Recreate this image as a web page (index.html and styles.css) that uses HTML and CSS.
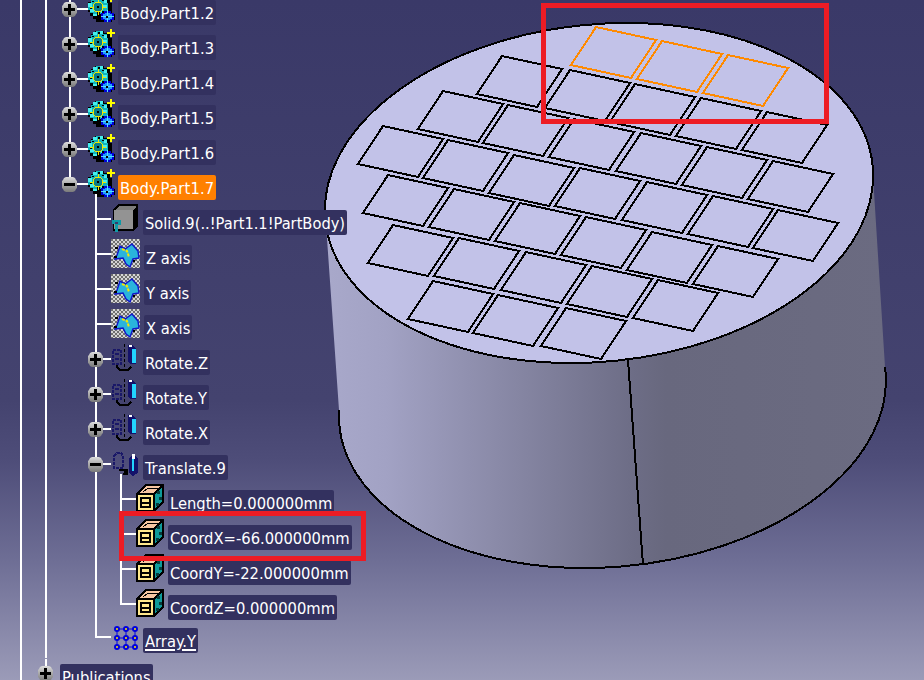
FILE: index.html
```html
<!DOCTYPE html>
<html lang="en">

<head>
    <meta charset="UTF-8" />
    <title>Body.Part1.7 - Translate.9</title>
    <link rel="stylesheet" href="styles.css">
</head>

<body>
    <!-- shared icons -->
    <svg class="sprites" aria-hidden="true">
        <defs>
            <pattern id="checker" width="4" height="4" patternUnits="userSpaceOnUse">
                <rect width="4" height="4" fill="#d4d4d4" />
                <rect width="2" height="2" fill="#6f6f6f" />
                <rect x="2" y="2" width="2" height="2" fill="#6f6f6f" />
            </pattern>
            <linearGradient id="ball" x1="0" y1="0" x2="0" y2="1">
                <stop offset="0" stop-color="#dcdcdc" />
                <stop offset="0.5" stop-color="#a8a8a8" />
                <stop offset="1" stop-color="#7a7a7a" />
            </linearGradient>
            <linearGradient id="side" gradientUnits="userSpaceOnUse" x1="330" y1="0" x2="890" y2="0">
                <stop offset="0" stop-color="#a8a8ca" />
                <stop offset="0.1" stop-color="#a2a2c4" />
                <stop offset="0.54" stop-color="#6d6d86" />
                <stop offset="0.6" stop-color="#68687e" />
                <stop offset="1" stop-color="#6b6b81" />
            </linearGradient>
            <polygon id="tile" points="0,0 60,13 35,51 -25,38" />
        </defs>

        <symbol id="i-plus" viewBox="0 0 15 15">
            <path fill="url(#ball)" d="M4 0h7l2 1 1 2 1 1v7l-1 1-1 2-2 1H4l-2-1-1-2-1-1V4l1-1 1-2z" />
            <path fill="#000" d="M6 2h3v4h4v3H9v4H6V9H2V6h4z" />
        </symbol>
        <symbol id="i-minus" viewBox="0 0 15 15">
            <path fill="url(#ball)" d="M4 0h7l2 1 1 2 1 1v7l-1 1-1 2-2 1H4l-2-1-1-2-1-1V4l1-1 1-2z" />
            <rect x="2" y="6" width="11" height="3" fill="#000" />
        </symbol>

        <symbol id="i-body" viewBox="0 0 28 28" shape-rendering="crispEdges">
            <path fill="#000" d="M7 2h9v2h6v5h2v8h-3v8h-5v3H8v-3H5v-3H2v-4H0V8h3V5h4z" />
            <path fill="#12b4bc" d="M5 4h3V2h7v3h4v4h1v8h-4v3H9v2H5v-3H2v-3H0V9h3V6h2z" />
            <path fill="#45f0ee" d="M5 3h4v3H5zM12 2h3v3h-3zM0 9h4v4H0zM2 15h4v3H2zM5 20h4v2H5zM13 17h4v3h-4zM16 6h3v3h-3zM15 11h4v3h-4z" />
            <path fill="#000" d="M10 3h2v2h-2zM4 7h2v1H4zM2 13h2v2H2zM14 6h2v1h-2zM9 18h3v2H9z" />
            <path fill="#0c7f88" d="M7 9h6l2 2v4l-2 2H7l-2-2v-4z" />
            <path fill="none" stroke="#eee800" d="M7.5 8.5h5l2 2v5l-2 2h-5l-2-2v-5zM10 5v3M10 18v3M2 13h3M15 13h3" />
            <rect x="9" y="12" width="2" height="2" fill="#000" />
            <path fill="#000" d="M14 17h10v3h3v6h-3v2H14z" />
            <path fill="#0000d8" d="M16 17h7v2h3v7h-3v2h-7v-2h-3v-7h3z" />
            <path fill="#1e9cff" d="M17 19h5v1h2v5h-2v1h-5v-1h-2v-5h2z" />
            <path fill="none" stroke="#55e0ff" d="M19 16v12M13 22.5h13" />
            <rect x="18" y="22" width="2" height="2" fill="#000" />
            <path fill="#ffff00" d="M22 0h2v3h3v2h-3v3h-2V5h-3V3h3z" />
        </symbol>

        <symbol id="i-solid" viewBox="0 0 28 28" shape-rendering="crispEdges">
            <path fill="#000" d="M7 0h20v22l-5 5H2V5z" />
            <rect x="3" y="6" width="19" height="19" fill="#939393" />
            <path fill="#7d7d7d" d="M8 2h17v2l-3 2H4z" />
            <path fill="#0f9aa6" d="M1 16h9v5H7v7H4v-8H1z" />
            <rect x="4" y="18" width="3" height="2" fill="#3a3a6a" />
        </symbol>

        <symbol id="i-axis" viewBox="0 0 29 29">
            <rect width="29" height="29" fill="url(#checker)" />
            <path fill="#2ab4dc" stroke="#1018c8" stroke-width="1.5" d="M6 16 L9 7 L14 10 L21 5 L27 12 L28 19 L22 20 L19 28 L15 25 L12 19 L4 20 Z" />
            <path fill="none" stroke="#f4e800" stroke-width="2" stroke-dasharray="3 1" d="M11 10 L16 12 L18 18" />
            <path fill="#000" d="M4 8h3v2H4zM3 17h3v2H3zM22 21h2v2h-2z" />
        </symbol>

        <symbol id="i-rotate" viewBox="0 0 28 28" shape-rendering="crispEdges">
            <path fill="none" stroke="#1a1868" stroke-width="2" stroke-dasharray="3 1" d="M2 6h8v14H2z" />
            <path fill="#1a1868" d="M4 9h4v2H4zM4 14h4v2H4z" />
            <path stroke="#000" stroke-dasharray="3 2" d="M13 0v23" />
            <path fill="#14126a" d="M17 1h4l4 3v16h-5l-3-2z" />
            <rect x="21" y="5" width="4" height="14" fill="#22d4ff" />
            <path fill="#fff" d="M18 1h3v2h-3z" />
            <path fill="none" stroke="#000" stroke-width="2" d="M6 21v2l3 3h8l3-3" />
        </symbol>

        <symbol id="i-translate" viewBox="0 0 28 28" shape-rendering="crispEdges">
            <path fill="none" stroke="#1a1868" stroke-width="2" stroke-dasharray="3 1" d="M3 7l3-3h4l2 3v12H3z" />
            <path stroke="#000" stroke-width="2" d="M8 21h6l3 2" />
            <path fill="#000" d="M14 20h3v6h-5z" />
            <path fill="#14126a" d="M18 9l4-4 5 4v15l-5 3-4-3z" />
            <rect x="21" y="8" width="2" height="14" fill="#22d4ff" />
            <rect x="21" y="5" width="3" height="5" fill="#fff" />
        </symbol>

        <symbol id="i-param" viewBox="0 0 28 28" shape-rendering="crispEdges">
            <path fill="#f7c6a2" stroke="#000" stroke-width="2" d="M1 10 L10 1 L27 1 L18 10 Z" />
            <path fill="none" stroke="#000" d="M7 8 L12 4 L23 4" />
            <path fill="#0f9a9a" stroke="#000" stroke-width="2" d="M18 10 L27 1 L27 18 L18 27 Z" />
            <rect x="21" y="7" width="3" height="3" fill="#063c3c" />
            <rect x="23" y="13" width="3" height="3" fill="#063c3c" />
            <rect x="20" y="19" width="3" height="3" fill="#063c3c" />
            <rect x="1" y="10" width="17" height="17" fill="#ffe88c" stroke="#000" stroke-width="2" />
            <path fill="#000" d="M4 13h11v11H4z" />
            <path fill="#ffe88c" d="M6 15h7v3H6zM6 20h7v2H6z" />
        </symbol>

        <symbol id="i-array" viewBox="0 0 28 28">
            <path fill="none" stroke="#0000e0" d="M6 7v18M15 7v18M24 7v18M6 7h18M6 16h18M6 25h18" />
            <g fill="#ffe900" stroke="#0000e0" stroke-width="2">
                <circle cx="6" cy="7" r="2" />
                <circle cx="15" cy="7" r="2" />
                <circle cx="24" cy="7" r="2" />
                <circle cx="6" cy="16" r="2" />
                <circle cx="15" cy="16" r="2" />
                <circle cx="24" cy="16" r="2" />
                <circle cx="6" cy="25" r="2" />
                <circle cx="15" cy="25" r="2" />
                <circle cx="24" cy="25" r="2" />
            </g>
        </symbol>
    </svg>

    <div class="view">
        <!-- 3D part on the canvas -->
        <svg class="model" width="924" height="680" viewBox="0 0 924 680">
            <path fill="url(#side)" d="M325 210 L339 410 A274.4 168.6 -5.8 1 0 885 367 L873 176 Z" />
            <path class="edge" d="M339 410 A274.4 168.6 -5.8 1 0 885 367" />
            <path class="edge" d="M628 360 L643 565" />
            <ellipse class="edge top-face" cx="599" cy="193" rx="275" ry="168.6" transform="rotate(-5.8 599 193)" />

            <g class="tiles">
                <use href="#tile" x="502" y="56" />
                <use href="#tile" x="570" y="70" />
                <use href="#tile" x="635" y="84" />
                <use href="#tile" x="701" y="98" />
                <use href="#tile" x="767" y="112" />

                <use href="#tile" x="443" y="91" />
                <use href="#tile" x="508" y="105" />
                <use href="#tile" x="574" y="119" />
                <use href="#tile" x="641" y="133" />
                <use href="#tile" x="707" y="147" />
                <use href="#tile" x="773" y="161" />

                <use href="#tile" x="383" y="126" />
                <use href="#tile" x="448" y="140" />
                <use href="#tile" x="514" y="155" />
                <use href="#tile" x="580" y="168" />
                <use href="#tile" x="647" y="182" />
                <use href="#tile" x="713" y="196" />
                <use href="#tile" x="778" y="210" />

                <use href="#tile" x="388" y="175" />
                <use href="#tile" x="454" y="189" />
                <use href="#tile" x="520" y="203" />
                <use href="#tile" x="586" y="217" />
                <use href="#tile" x="652" y="232" />
                <use href="#tile" x="718" y="246" />

                <use href="#tile" x="393" y="225" />
                <use href="#tile" x="459" y="238" />
                <use href="#tile" x="526" y="252" />
                <use href="#tile" x="592" y="266" />
                <use href="#tile" x="658" y="280" />

                <use href="#tile" x="433" y="281" />
                <use href="#tile" x="498" y="295" />
                <use href="#tile" x="566" y="308" />
            </g>
            <g class="tiles tiles-picked">
                <use href="#tile" x="596" y="27" />
                <use href="#tile" x="662" y="41" />
                <use href="#tile" x="728" y="55" />
            </g>
        </svg>

        <!-- specification tree -->
        <ul class="tree">
            <li>
                <ul class="level2">
                    <li>
                        <ul class="level3">
                            <li>
                                <div class="row">
                                    <svg class="exp"><use href="#i-plus" /></svg>
                                    <span class="stub"></span>
                                    <svg class="icon"><use href="#i-body" /></svg>
                                    <span class="lbl">Body.Part1.2</span>
                                </div>
                            </li>
                            <li>
                                <div class="row">
                                    <svg class="exp"><use href="#i-plus" /></svg>
                                    <span class="stub"></span>
                                    <svg class="icon"><use href="#i-body" /></svg>
                                    <span class="lbl">Body.Part1.3</span>
                                </div>
                            </li>
                            <li>
                                <div class="row">
                                    <svg class="exp"><use href="#i-plus" /></svg>
                                    <span class="stub"></span>
                                    <svg class="icon"><use href="#i-body" /></svg>
                                    <span class="lbl">Body.Part1.4</span>
                                </div>
                            </li>
                            <li>
                                <div class="row">
                                    <svg class="exp"><use href="#i-plus" /></svg>
                                    <span class="stub"></span>
                                    <svg class="icon"><use href="#i-body" /></svg>
                                    <span class="lbl">Body.Part1.5</span>
                                </div>
                            </li>
                            <li>
                                <div class="row">
                                    <svg class="exp"><use href="#i-plus" /></svg>
                                    <span class="stub"></span>
                                    <svg class="icon"><use href="#i-body" /></svg>
                                    <span class="lbl">Body.Part1.6</span>
                                </div>
                            </li>
                            <li class="end">
                                <div class="row">
                                    <svg class="exp"><use href="#i-minus" /></svg>
                                    <span class="stub"></span>
                                    <svg class="icon"><use href="#i-body" /></svg>
                                    <span class="lbl lbl-active">Body.Part1.7</span>
                                </div>
                                <ul class="level4">
                                    <li>
                                        <div class="row">
                                            <span class="stub"></span>
                                            <svg class="icon"><use href="#i-solid" /></svg>
                                            <span class="lbl lbl-long">Solid.9(..!Part1.1!PartBody)</span>
                                        </div>
                                    </li>
                                    <li>
                                        <div class="row">
                                            <span class="stub"></span>
                                            <svg class="icon icon-axis"><use href="#i-axis" /></svg>
                                            <span class="lbl">Z axis</span>
                                        </div>
                                    </li>
                                    <li>
                                        <div class="row">
                                            <span class="stub"></span>
                                            <svg class="icon icon-axis"><use href="#i-axis" /></svg>
                                            <span class="lbl">Y axis</span>
                                        </div>
                                    </li>
                                    <li>
                                        <div class="row">
                                            <span class="stub"></span>
                                            <svg class="icon icon-axis"><use href="#i-axis" /></svg>
                                            <span class="lbl">X axis</span>
                                        </div>
                                    </li>
                                    <li>
                                        <div class="row">
                                            <svg class="exp"><use href="#i-plus" /></svg>
                                            <span class="stub"></span>
                                            <svg class="icon"><use href="#i-rotate" /></svg>
                                            <span class="lbl">Rotate.Z</span>
                                        </div>
                                    </li>
                                    <li>
                                        <div class="row">
                                            <svg class="exp"><use href="#i-plus" /></svg>
                                            <span class="stub"></span>
                                            <svg class="icon"><use href="#i-rotate" /></svg>
                                            <span class="lbl">Rotate.Y</span>
                                        </div>
                                    </li>
                                    <li>
                                        <div class="row">
                                            <svg class="exp"><use href="#i-plus" /></svg>
                                            <span class="stub"></span>
                                            <svg class="icon"><use href="#i-rotate" /></svg>
                                            <span class="lbl">Rotate.X</span>
                                        </div>
                                    </li>
                                    <li>
                                        <div class="row">
                                            <svg class="exp"><use href="#i-minus" /></svg>
                                            <span class="stub"></span>
                                            <svg class="icon"><use href="#i-translate" /></svg>
                                            <span class="lbl">Translate.9</span>
                                        </div>
                                        <ul class="level5">
                                            <li>
                                                <div class="row">
                                                    <span class="stub"></span>
                                                    <svg class="icon"><use href="#i-param" /></svg>
                                                    <span class="lbl">Length=0.000000mm</span>
                                                </div>
                                            </li>
                                            <li>
                                                <div class="row">
                                                    <span class="stub"></span>
                                                    <svg class="icon"><use href="#i-param" /></svg>
                                                    <span class="lbl">CoordX=-66.000000mm</span>
                                                </div>
                                            </li>
                                            <li>
                                                <div class="row">
                                                    <span class="stub"></span>
                                                    <svg class="icon"><use href="#i-param" /></svg>
                                                    <span class="lbl">CoordY=-22.000000mm</span>
                                                </div>
                                            </li>
                                            <li class="end">
                                                <div class="row">
                                                    <span class="stub"></span>
                                                    <svg class="icon"><use href="#i-param" /></svg>
                                                    <span class="lbl">CoordZ=0.000000mm</span>
                                                </div>
                                            </li>
                                        </ul>
                                    </li>
                                    <li class="end last-array">
                                        <div class="row">
                                            <span class="stub"></span>
                                            <svg class="icon"><use href="#i-array" /></svg>
                                            <span class="lbl lbl-link">Array.Y</span>
                                        </div>
                                    </li>
                                </ul>
                            </li>
                        </ul>
                    </li>
                    <li class="end publications">
                        <div class="row">
                            <svg class="exp"><use href="#i-plus" /></svg>
                            <span class="lbl">Publications</span>
                        </div>
                    </li>
                </ul>
            </li>
        </ul>

        <!-- red call-outs -->
        <div class="mark mark-tiles"></div>
        <div class="mark mark-coord"></div>
    </div>
</body>

</html>
```

FILE: styles.css
```css
:root {
    --linha: #ffffff;
    --rotulo: #33315f;
    --laranja: #ff8000;
    --vermelho: #ed1c24;
}

body {
    margin: 0;
    font-family: 'DejaVu Sans Condensed', 'DejaVu Sans', sans-serif;
    font-stretch: condensed;
    color: #ffffff;
}

.sprites {
    position: absolute;
    width: 0;
    height: 0;
}

.view {
    position: relative;
    width: 924px;
    height: 680px;
    overflow: hidden;
    background: linear-gradient(180deg, #3a3968 0, #44436f 400px, #4e4d79 460px, #6e6e95 560px, #9b9bb8 680px);
}

.model {
    position: absolute;
    left: 0;
    top: 0;
}

.edge {
    fill: none;
    stroke: #000000;
    stroke-width: 2;
    shape-rendering: crispEdges;
}

.top-face {
    fill: #c2c2e8;
}

.tiles {
    fill: none;
    stroke: #000000;
    stroke-width: 2;
    shape-rendering: crispEdges;
}

.tiles-picked {
    stroke: #ff8a00;
}

/* tree */
.tree,
.tree ul {
    list-style: none;
    margin: 0;
    padding: 0;
}

.tree {
    position: relative;
    margin: -5px 0 0 20px;
}

.tree .level2 {
    margin-left: 25px;
}

.tree .level3 {
    margin-left: 24px;
    --stub: 19px;
}

.tree .level4 {
    margin-left: 26px;
    --stub: 16px;
}

.tree .level5 {
    margin-left: 25px;
    --stub: 16px;
}

.tree li {
    position: relative;
}

.tree li::before {
    content: '';
    position: absolute;
    left: 0;
    top: 0;
    bottom: 0;
    width: 2px;
    background: var(--linha);
}

.tree li.end::before {
    bottom: auto;
    height: 15px;
}

.level4 > li:first-child::before,
.level5 > li:first-child::before {
    top: -11px;
}

.tree li.last-array {
    margin-top: -2px;
}

.tree li.publications {
    margin-top: 1px;
}

.row {
    position: relative;
    display: flex;
    align-items: flex-start;
    height: 35px;
}

.stub {
    flex: none;
    width: var(--stub);
    height: 2px;
    margin-top: 13px;
    background: var(--linha);
}

.exp {
    position: absolute;
    left: -7px;
    top: 7px;
    width: 15px;
    height: 15px;
}

.icon {
    flex: none;
    width: 28px;
    height: 28px;
    margin-top: -1px;
}

.icon-axis {
    width: 29px;
    height: 29px;
}

.lbl {
    flex: none;
    height: 25px;
    line-height: 27px;
    margin: 5px 0 0 2px;
    padding: 0 2px;
    border-radius: 2px;
    background: var(--rotulo);
    font-size: 16.4px;
    white-space: nowrap;
}

.level3 > li > .row > .lbl {
    letter-spacing: 0.2px;
}

.level4 .row > .stub + .icon + .lbl {
    margin-left: 4px;
}

.level4 .row > .icon-axis + .lbl {
    margin-left: 3px;
}

.lbl-long {
    font-size: 16.3px;
}

.lbl-active {
    background: var(--laranja);
}

.lbl-link {
    text-decoration: underline;
    text-decoration-thickness: 2px;
    text-underline-offset: 2px;
}

.publications .lbl {
    margin-left: 15px;
}

/* call-outs */
.mark {
    position: absolute;
    box-sizing: border-box;
    border: 5px solid var(--vermelho);
}

.mark-tiles {
    left: 541px;
    top: 3px;
    width: 288px;
    height: 121px;
}

.mark-coord {
    left: 119px;
    top: 511px;
    width: 247px;
    height: 50px;
}
```
